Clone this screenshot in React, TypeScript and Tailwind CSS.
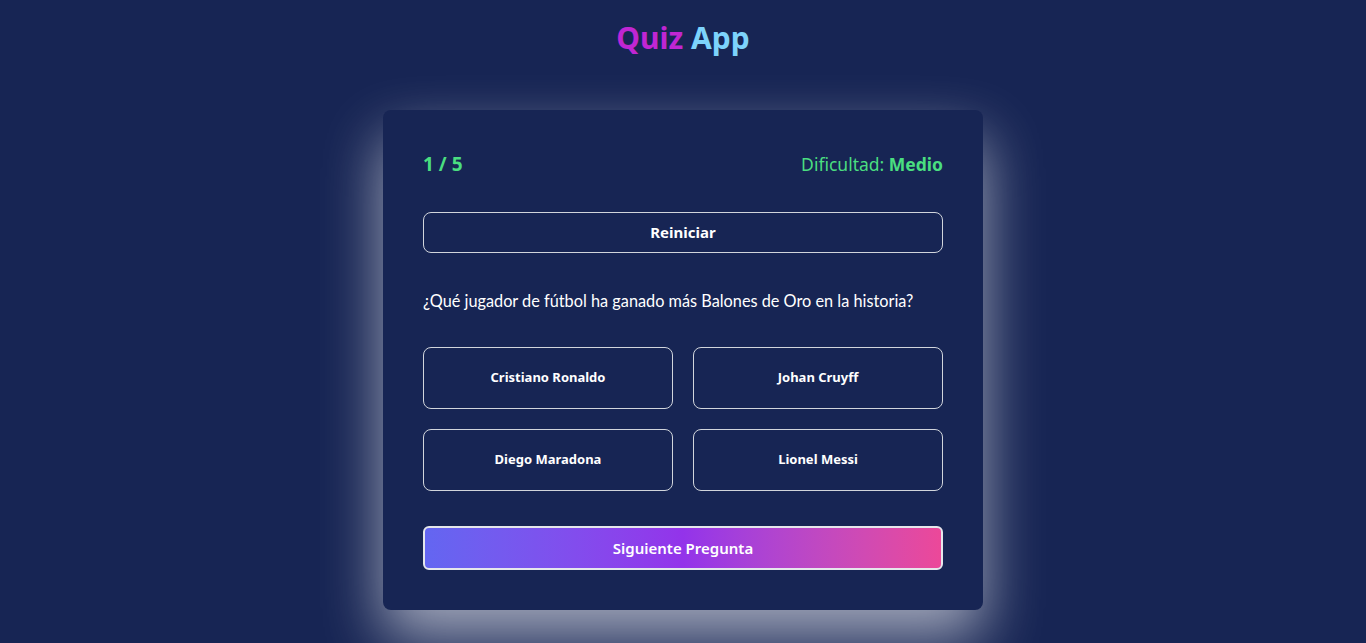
import React from "react";

export default function App() {
  const answers = ["Cristiano Ronaldo", "Johan Cruyff", "Diego Maradona", "Lionel Messi"];
  return (
    <div
      className="min-h-[643px] w-full bg-[#172554] text-white flex flex-col items-center"
      style={{ fontFamily: '"Noto Sans", "Open Sans", sans-serif' }}
    >
      <h1 className="mt-[17px] text-[30px] font-bold leading-[42px]">
        <span className="text-[#c026d3]">Quiz</span>{" "}
        <span className="text-[#7dd3fc]">App</span>
      </h1>
      <div className="mt-[51px] w-[600px] rounded-lg bg-[#172554] p-10 shadow-[0_28px_60px_rgba(255,255,255,0.6)]">
        <div className="flex items-center justify-between h-7 text-[18px] text-[#4ade80]">
          <span className="font-bold text-[19px]">1 / 5</span>
          <span className="text-[17.5px]">
            Dificultad: <span className="font-bold">Medio</span>
          </span>
        </div>
        <button className="mt-[34px] w-full h-[41px] rounded-lg border border-gray-300 text-[15px] font-bold text-white">
          Reiniciar
        </button>
        <p
          className="mt-[36px] text-[16.3px] leading-6 whitespace-nowrap"
          style={{ fontFamily: 'Lato, "Noto Sans", sans-serif' }}
        >
          ¿Qué jugador de fútbol ha ganado más Balones de Oro en la historia?
        </p>
        <div className="mt-[34px] grid grid-cols-2 gap-x-5 gap-y-5">
          {answers.map((a) => (
            <button
              key={a}
              className="h-[62px] rounded-lg border border-gray-300 text-[13px] font-bold text-white"
            >
              {a}
            </button>
          ))}
        </div>
        <button className="mt-[35px] w-full h-[44px] rounded-md border-2 border-[#e5e7eb] bg-gradient-to-r from-[#6366f1] via-[#9333ea] to-[#ec4899] text-[15px] font-semibold text-white">
          Siguiente Pregunta
        </button>
      </div>
    </div>
  );
}
